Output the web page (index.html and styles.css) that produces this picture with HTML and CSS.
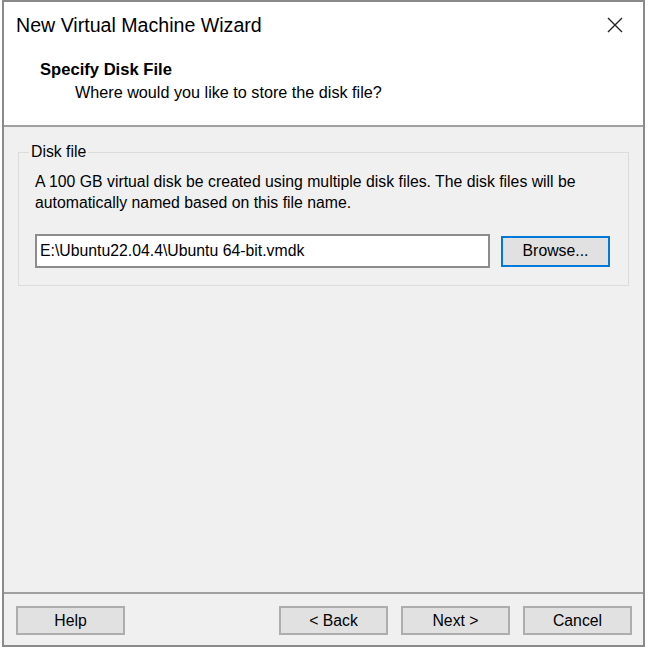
FILE: index.html
```html
<!DOCTYPE html>
<html lang="en">
<head>
  <meta charset="UTF-8">
  <title>New Virtual Machine Wizard</title>
  <link rel="stylesheet" href="styles.css">
</head>
<body>

  <div class="wizard">
    <div class="header">
      <div class="titlebar">
        <span class="title">New Virtual Machine Wizard</span>
        <button class="close" aria-label="Close">
          <svg width="16" height="16" viewBox="0 0 16 16">
            <path d="M1 1 L15 15 M15 1 L1 15" stroke="#222" stroke-width="1.4" fill="none"/>
          </svg>
        </button>
      </div>
      <div class="page-title">Specify Disk File</div>
      <div class="page-sub">Where would you like to store the disk file?</div>
    </div>

    <div class="content">
      <fieldset class="group">
        <legend>Disk file</legend>
        <p class="desc">A 100 GB virtual disk be created using multiple disk files. The disk files will be automatically named based on this file name.</p>
        <div class="file-row">
          <input class="path" type="text" value="E:\Ubuntu22.04.4\Ubuntu 64-bit.vmdk">
          <button class="btn focused">Browse...</button>
        </div>
      </fieldset>
    </div>

    <div class="footer">
      <button class="btn">Help</button>
      <div class="spacer"></div>
      <button class="btn">&lt; Back</button>
      <button class="btn">Next &gt;</button>
      <button class="btn">Cancel</button>
    </div>
  </div>

</body>
</html>
```

FILE: styles.css
```css
html, body {
  margin: 0;
  padding: 0;
  background: #fff;
}
body {
  font-family: "Liberation Sans", Arial, sans-serif;
  font-size: 15.8px;
  color: #000;
}
.wizard {
  box-sizing: border-box;
  width: 643px;
  height: 647px;
  margin-left: 2px;
  border: 2px solid #8a8a8a;
  display: flex;
  flex-direction: column;
  background: #f0f0f0;
}
.header {
  background: #fff;
  height: 123px;
  border-bottom: 2px solid #a0a0a0;
}
.titlebar {
  display: flex;
  align-items: center;
  justify-content: space-between;
  height: 46px;
  padding-left: 12px;
}
.title {
  font-size: 19.6px;
}
.close {
  border: none;
  background: none;
  padding: 0;
  width: 44px;
  height: 46px;
  display: flex;
  align-items: center;
  justify-content: center;
  margin-right: 6px;
}
.page-title {
  font-weight: bold;
  font-size: 16.6px;
  margin-top: 12px;
  padding-left: 36px;
}
.page-sub {
  font-size: 16.2px;
  margin-top: 3px;
  padding-left: 71px;
}
.content {
  flex: 1;
  padding: 16px 14px 0 14px;
}
.group {
  margin: 0;
  border: 1px solid #dcdcdc;
  padding: 0 18px 17px 16px;
}
.group legend {
  padding: 0 2px;
  margin-left: -6px;
}
.desc {
  margin: 10px 0 0;
  line-height: 21px;
}
.file-row {
  display: flex;
  align-items: center;
  gap: 11px;
  margin-top: 21px;
}
.path {
  flex: 1;
  height: 34px;
  box-sizing: border-box;
  border: 2px solid #8c8c8c;
  font: inherit;
  padding: 0 3px;
  background: #fff;
}
.btn {
  font: inherit;
  width: 109px;
  height: 29px;
  background: #e1e1e1;
  border: 2px solid #adadad;
  color: #000;
  padding: 0;
}
.btn.focused {
  border-color: #0078d7;
  height: 31px;
}
.footer {
  display: flex;
  gap: 13px;
  border-top: 2px solid #a0a0a0;
  padding: 12px 11px 10px 12px;
}
.spacer {
  flex: 1;
}
```
